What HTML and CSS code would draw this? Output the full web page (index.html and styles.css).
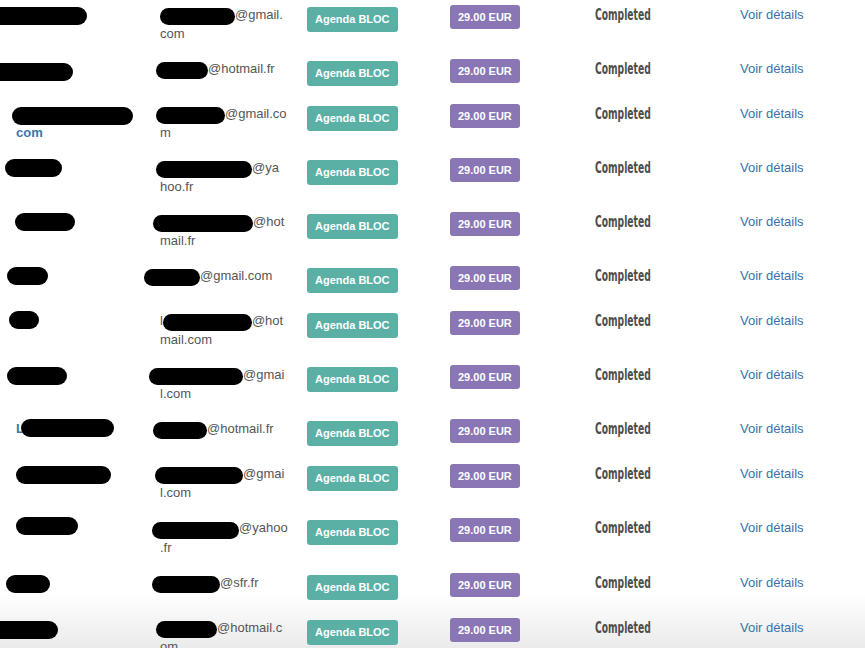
FILE: index.html
```html
<!DOCTYPE html>
<html lang="fr">
<head>
<meta charset="utf-8">
<title>Commandes</title>
<link rel="stylesheet" href="styles.css">
</head>
<body>
<div class="table">

  <div class="row">
    <div class="cell name"><span class="redact" style="left:-10px;top:10px;width:97px"></span></div>
    <div class="cell email"><div class="ln"><span class="blob" style="margin-left:0;width:75px"></span>@gmail.</div><div class="ln">com</div></div>
    <div class="cell"><span class="badge teal">Agenda BLOC</span></div>
    <div class="cell"><span class="badge purple">29.00 EUR</span></div>
    <div class="cell status"><span>Completed</span></div>
    <div class="cell"><a class="link" href="#">Voir détails</a></div>
  </div>

  <div class="row">
    <div class="cell name"><span class="redact" style="left:-10px;top:12px;width:83px"></span></div>
    <div class="cell email"><div class="ln"><span class="blob" style="margin-left:-4px;width:52px"></span>@hotmail.fr</div></div>
    <div class="cell"><span class="badge teal">Agenda BLOC</span></div>
    <div class="cell"><span class="badge purple">29.00 EUR</span></div>
    <div class="cell status"><span>Completed</span></div>
    <div class="cell"><a class="link" href="#">Voir détails</a></div>
  </div>

  <div class="row">
    <div class="cell name"><div class="ln">&nbsp;</div><div class="ln nm">com</div><span class="redact" style="left:12px;top:11px;width:121px"></span></div>
    <div class="cell email"><div class="ln"><span class="blob" style="margin-left:-4px;width:69px"></span>@gmail.co</div><div class="ln">m</div></div>
    <div class="cell"><span class="badge teal">Agenda BLOC</span></div>
    <div class="cell"><span class="badge purple">29.00 EUR</span></div>
    <div class="cell status"><span>Completed</span></div>
    <div class="cell"><a class="link" href="#">Voir détails</a></div>
  </div>

  <div class="row">
    <div class="cell name"><span class="redact" style="left:5px;top:9px;width:57px"></span></div>
    <div class="cell email"><div class="ln"><span class="blob" style="margin-left:-4px;width:96px"></span>@ya</div><div class="ln">hoo.fr</div></div>
    <div class="cell"><span class="badge teal">Agenda BLOC</span></div>
    <div class="cell"><span class="badge purple">29.00 EUR</span></div>
    <div class="cell status"><span>Completed</span></div>
    <div class="cell"><a class="link" href="#">Voir détails</a></div>
  </div>

  <div class="row">
    <div class="cell name"><span class="redact" style="left:15px;top:9px;width:60px"></span></div>
    <div class="cell email"><div class="ln"><span class="blob" style="margin-left:-7px;width:100px"></span>@hot</div><div class="ln">mail.fr</div></div>
    <div class="cell"><span class="badge teal">Agenda BLOC</span></div>
    <div class="cell"><span class="badge purple">29.00 EUR</span></div>
    <div class="cell status"><span>Completed</span></div>
    <div class="cell"><a class="link" href="#">Voir détails</a></div>
  </div>

  <div class="row">
    <div class="cell name"><span class="redact" style="left:7px;top:9px;width:41px"></span></div>
    <div class="cell email"><div class="ln"><span class="blob" style="margin-left:-16px;width:56px"></span>@gmail.com</div></div>
    <div class="cell"><span class="badge teal">Agenda BLOC</span></div>
    <div class="cell"><span class="badge purple">29.00 EUR</span></div>
    <div class="cell status"><span>Completed</span></div>
    <div class="cell"><a class="link" href="#">Voir détails</a></div>
  </div>

  <div class="row">
    <div class="cell name"><span class="redact" style="left:9px;top:8px;width:30px"></span></div>
    <div class="cell email"><div class="ln">l<span class="blob" style="margin-left:0;width:89px"></span>@hot</div><div class="ln">mail.com</div></div>
    <div class="cell"><span class="badge teal">Agenda BLOC</span></div>
    <div class="cell"><span class="badge purple">29.00 EUR</span></div>
    <div class="cell status"><span>Completed</span></div>
    <div class="cell"><a class="link" href="#">Voir détails</a></div>
  </div>

  <div class="row">
    <div class="cell name"><span class="redact" style="left:7px;top:10px;width:60px"></span></div>
    <div class="cell email"><div class="ln"><span class="blob" style="margin-left:-11px;width:94px"></span>@gmai</div><div class="ln">l.com</div></div>
    <div class="cell"><span class="badge teal">Agenda BLOC</span></div>
    <div class="cell"><span class="badge purple">29.00 EUR</span></div>
    <div class="cell status"><span>Completed</span></div>
    <div class="cell"><a class="link" href="#">Voir détails</a></div>
  </div>

  <div class="row">
    <div class="cell name"><div class="ln nm">L</div><span class="redact" style="left:21px;top:8px;width:93px"></span></div>
    <div class="cell email"><div class="ln"><span class="blob" style="margin-left:-7px;width:54px"></span>@hotmail.fr</div></div>
    <div class="cell"><span class="badge teal">Agenda BLOC</span></div>
    <div class="cell"><span class="badge purple">29.00 EUR</span></div>
    <div class="cell status"><span>Completed</span></div>
    <div class="cell"><a class="link" href="#">Voir détails</a></div>
  </div>

  <div class="row">
    <div class="cell name"><span class="redact" style="left:16px;top:10px;width:95px"></span></div>
    <div class="cell email"><div class="ln"><span class="blob" style="margin-left:-5px;width:88px"></span>@gmai</div><div class="ln">l.com</div></div>
    <div class="cell"><span class="badge teal">Agenda BLOC</span></div>
    <div class="cell"><span class="badge purple">29.00 EUR</span></div>
    <div class="cell status"><span>Completed</span></div>
    <div class="cell"><a class="link" href="#">Voir détails</a></div>
  </div>

  <div class="row">
    <div class="cell name"><span class="redact" style="left:16px;top:7px;width:62px"></span></div>
    <div class="cell email"><div class="ln"><span class="blob" style="margin-left:-8px;width:87px"></span>@yahoo</div><div class="ln">.fr</div></div>
    <div class="cell"><span class="badge teal">Agenda BLOC</span></div>
    <div class="cell"><span class="badge purple">29.00 EUR</span></div>
    <div class="cell status"><span>Completed</span></div>
    <div class="cell"><a class="link" href="#">Voir détails</a></div>
  </div>

  <div class="row">
    <div class="cell name"><span class="redact" style="left:6px;top:10px;width:44px"></span></div>
    <div class="cell email"><div class="ln"><span class="blob" style="margin-left:-8px;width:68px"></span>@sfr.fr</div></div>
    <div class="cell"><span class="badge teal">Agenda BLOC</span></div>
    <div class="cell"><span class="badge purple">29.00 EUR</span></div>
    <div class="cell status"><span>Completed</span></div>
    <div class="cell"><a class="link" href="#">Voir détails</a></div>
  </div>

  <div class="row">
    <div class="cell name"><span class="redact" style="left:-10px;top:11px;width:68px"></span></div>
    <div class="cell email"><div class="ln"><span class="blob" style="margin-left:-4px;width:61px"></span>@hotmail.c</div><div class="ln">om</div></div>
    <div class="cell"><span class="badge teal">Agenda BLOC</span></div>
    <div class="cell"><span class="badge purple">29.00 EUR</span></div>
    <div class="cell status"><span>Completed</span></div>
    <div class="cell"><a class="link" href="#">Voir détails</a></div>
  </div>

</div>
</body>
</html>
```

FILE: styles.css
```css
html {
  height: 648px;
  overflow: hidden;
  background: linear-gradient(to bottom, #ffffff 0, #ffffff 592px, #ebebeb 648px) no-repeat;
  background-size: 100% 648px;
}

body {
  margin: 0;
  height: 648px;
  overflow: hidden;
  font-family: "Liberation Sans", Arial, Helvetica, sans-serif;
  font-size: 13px;
  line-height: 19px;
  color: #555555;
}

.table {
  display: flex;
  flex-direction: column;
  margin-top: -3px;
}

.row {
  position: relative;
  display: grid;
  grid-template-columns: 144px 147px 143px 145px 145px 1fr;
  padding-left: 16px;
}

.cell {
  padding: 8px 0;
  min-width: 0;
}

.ln {
  white-space: nowrap;
}

.nm {
  color: #3a77ac;
  font-weight: bold;
}

.redact {
  position: absolute;
  height: 18px;
  background: #000;
  border-radius: 9px;
}

.blob {
  display: inline-block;
  height: 17px;
  background: #000;
  border-radius: 9px;
  vertical-align: middle;
  position: relative;
  top: 1px;
}

.badge {
  display: inline-block;
  color: #ffffff;
  font-size: 11px;
  font-weight: bold;
  border-radius: 3px;
  text-align: center;
  vertical-align: top;
}

.teal {
  background: #5bb0a5;
  height: 25px;
  line-height: 25px;
  padding: 0 8px;
  margin-top: 2px;
  margin-bottom: 2px;
}

.purple {
  background: #8a76b4;
  height: 24px;
  line-height: 24px;
  padding: 0 8px;
  margin-top: 0;
  margin-bottom: 5px;
}

.status span {
  display: inline-block;
  position: relative;
  top: 1px;
  font-family: "Liberation Sans Narrow", "DejaVu Sans Condensed", "Liberation Sans", sans-serif;
  font-weight: bold;
  font-size: 15px;
  color: #4d4d4d;
  transform: scaleX(0.68);
  transform-origin: left center;
}

.link {
  color: #3672ad;
  text-decoration: none;
}
```
